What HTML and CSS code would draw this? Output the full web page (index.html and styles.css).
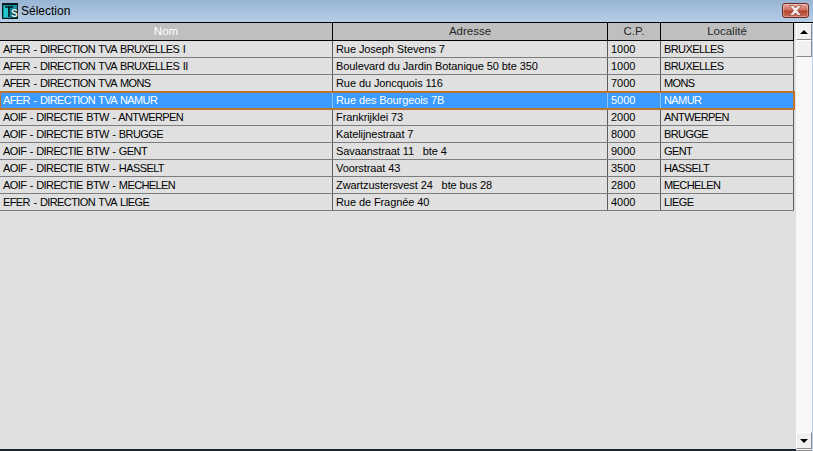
FILE: index.html
```html
<!DOCTYPE html>
<html lang="fr">
<head>
<meta charset="utf-8">
<title>Sélection</title>
<link rel="stylesheet" href="styles.css">
</head>
<body>
<div class="window">
  <div class="titlebar">
    <svg class="appicon" width="16" height="16" viewBox="0 0 16 16">
      <rect width="16" height="16" fill="#08181c"/>
      <rect x="1" y="2" width="14" height="13" fill="#0f8f9c"/>
      <rect x="2" y="3" width="4" height="11" fill="#23c8cf"/>
      <rect x="9" y="6" width="6" height="9" fill="#0a4a55"/>
      <path d="M3 4h8M7 4v10" stroke="#06181c" stroke-width="1.600" fill="none"/>
      <text class="icontext" x="9" y="14">S</text>
    </svg>
    <span class="title">Sélection</span>
    <button class="close" aria-label="Fermer">
      <svg width="15" height="11" viewBox="0 0 15 11"><path d="M1.500 .5h3.500l2.500 2.500 2.500-2.500h3.500l-4 5 4 5h-3.500l-2.500-2.500-2.500 2.500h-3.500l4-5z" fill="#f4ece8" stroke="#7a3028" stroke-width=".6"/></svg>
    </button>
  </div>
  <div class="content">
    <div class="grid">
      <div class="row header"><div>Nom</div><div class="dark">Adresse</div><div class="dark">C.P.</div><div class="dark">Localité</div></div>
      <div class="row"><div class="name">AFER - DIRECTION TVA BRUXELLES I</div><div class="addr">Rue Joseph Stevens 7</div><div>1000</div><div class="city">BRUXELLES</div></div>
      <div class="row"><div class="name">AFER - DIRECTION TVA BRUXELLES II</div><div class="addr">Boulevard du Jardin Botanique 50 bte 350</div><div>1000</div><div class="city">BRUXELLES</div></div>
      <div class="row"><div class="name">AFER - DIRECTION TVA MONS</div><div class="addr">Rue du Joncquois 116</div><div>7000</div><div class="city">MONS</div></div>
      <div class="row selected"><div class="name">AFER - DIRECTION TVA NAMUR</div><div class="addr">Rue des Bourgeois 7B</div><div>5000</div><div class="city">NAMUR</div></div>
      <div class="row"><div class="name">AOIF - DIRECTIE BTW - ANTWERPEN</div><div class="addr">Frankrijklei 73</div><div>2000</div><div class="city">ANTWERPEN</div></div>
      <div class="row"><div class="name">AOIF - DIRECTIE BTW - BRUGGE</div><div class="addr">Katelijnestraat 7</div><div>8000</div><div class="city">BRUGGE</div></div>
      <div class="row"><div class="name">AOIF - DIRECTIE BTW - GENT</div><div class="addr pre">Savaanstraat 11   bte 4</div><div>9000</div><div class="city">GENT</div></div>
      <div class="row"><div class="name">AOIF - DIRECTIE BTW - HASSELT</div><div class="addr">Voorstraat 43</div><div>3500</div><div class="city">HASSELT</div></div>
      <div class="row"><div class="name">AOIF - DIRECTIE BTW - MECHELEN</div><div class="addr pre">Zwartzustersvest 24   bte bus 28</div><div>2800</div><div class="city">MECHELEN</div></div>
      <div class="row"><div class="name">EFER - DIRECTION TVA LIEGE</div><div class="addr">Rue de Fragnée 40</div><div>4000</div><div class="city">LIEGE</div></div>
    </div>
    <div class="scrollbar">
      <div class="sbtn"><span class="arrow up"></span></div>
      <div class="thumb"></div>
      <div class="track"></div>
      <div class="sbtn"><span class="arrow down"></span></div>
    </div>
  </div>
</div>
</body>
</html>
```
FILE: styles.css
```css
* { box-sizing: border-box; }
html, body { margin: 0; padding: 0; }
body {
  width: 813px;
  height: 451px;
  overflow: hidden;
  font-family: "Liberation Sans", Arial, sans-serif;
  font-size: 11px;
  color: #000;
  background: #b9d1ea;
}
.window {
  width: 813px;
  height: 451px;
  display: flex;
  flex-direction: column;
}
.titlebar {
  height: 23px;
  flex: none;
  display: flex;
  align-items: center;
  padding: 0 3px 1px 2px;
  background: linear-gradient(#97b4d3, #b6cee7);
  border-bottom: 1px solid #000;
}
.appicon { flex: none; margin-right: 3px; }
.icontext {
  font-family: "Liberation Sans", Arial, sans-serif;
  font-size: 10px;
  font-weight: 700;
  fill: #e8f4f4;
}
.title { flex: 1; font-size: 12px; color: #000; }
.close {
  width: 27px;
  height: 15px;
  padding: 0;
  margin-right: 1px;
  display: flex;
  align-items: center;
  justify-content: center;
  border: 1px solid #6e2a22;
  border-radius: 3px;
  background: linear-gradient(#e3a698 0%, #cf6f5e 48%, #b3402e 52%, #c9705c 100%);
  box-shadow: inset 0 0 0 1px rgba(255,255,255,.3);
}
.content {
  flex: 1;
  display: flex;
  min-height: 0;
  background: #b9d1ea;
}
.grid {
  width: 796px;
  flex: none;
  background: #e0e0e0;
  border-bottom: 2px solid #1a2430;
}
.row {
  display: grid;
  grid-template-columns: 333px 275px 53px 133px;
  width: 794px;
  height: 17px;
  border-bottom: 1px solid #7d7d7d;
  line-height: 16px;
  white-space: nowrap;
}
.row > div {
  padding-left: 3px;
  border-right: 1px solid #5c5c5c;
  overflow: hidden;
}
.name { letter-spacing: -.6px; word-spacing: 1px; }
.city { letter-spacing: -.6px; }
.addr { letter-spacing: -.09px; }
.pre { white-space: pre; }
.header {
  height: 18px;
  background: #bfbfbf;
  border-bottom: 1px solid #000;
  line-height: 17px;
  text-align: center;
  font-size: 11.500px;
  color: #fff;
}
.header > div { padding-left: 0; border-right-color: #000; }
.header > .dark { color: #262626; }
.selected {
  background: #3b9bff;
  color: #fff;
  outline: 2px solid #bd7430;
  outline-offset: -1px;
  position: relative;
}
.selected > div { border-right-color: #8fc4ff; }
.scrollbar {
  width: 16px;
  flex: none;
  display: flex;
  flex-direction: column;
  padding-bottom: 1px;
  background: repeating-conic-gradient(#fff 0 25%, #f0f0f0 0 50%) 0 0 / 2px 2px;
  border-bottom: 1px solid #8a8a8a;
}
.sbtn, .thumb {
  height: 17px;
  flex: none;
  background: #f0f0f0;
  border: 1px solid;
  border-color: #fff #8a8a8a #8a8a8a #fff;
  display: flex;
  align-items: center;
  justify-content: center;
}
.track { flex: 1; }
.arrow {
  width: 0;
  height: 0;
  border-left: 4px solid transparent;
  border-right: 4px solid transparent;
}
.up { border-bottom: 4px solid #000; }
.down { border-top: 4px solid #000; }
```
